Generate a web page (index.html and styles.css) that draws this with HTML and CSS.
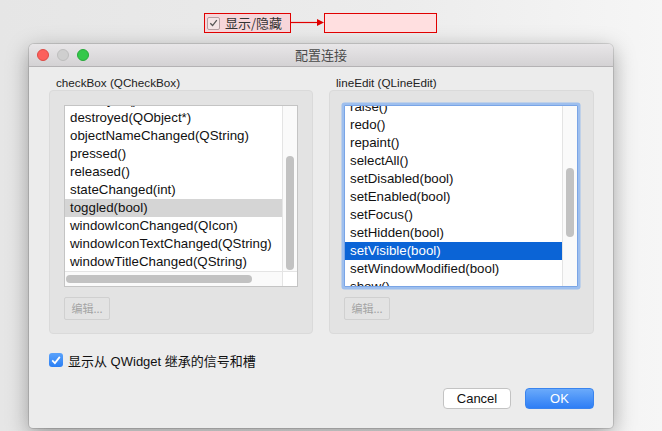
FILE: index.html
```html
<!DOCTYPE html>
<html>
<head>
<meta charset="utf-8">
<link rel="stylesheet" href="styles.css">
</head>
<body>
<div class="top">
  <div class="cbwidget">
    <span class="minicb"><svg width="12" height="12" viewBox="0 0 12 12"><path d="M2.5 6.2 L5 8.8 L9.6 2.8" fill="none" stroke="#555" stroke-width="1.4"/></svg></span>
    <span class="cbtext">显示/隐藏</span>
  </div>
  <svg class="connector" width="33" height="20" viewBox="0 0 33 20"><line x1="0" y1="9.5" x2="28" y2="9.5" stroke="#e00000" stroke-width="1.2"/><path d="M26 6 L33 9.5 L26 13 Z" fill="#e00000"/></svg>
  <div class="lineedit"></div>
</div>

<div class="window">
  <div class="titlebar">
    <div class="lights"><span class="light red"></span><span class="light gray"></span><span class="light green"></span></div>
    <div class="title">配置连接</div>
  </div>
  <div class="content">
    <div class="columns">
      <div class="col">
        <div class="glabel">checkBox (QCheckBox)</div>
        <div class="panel">
          <div class="list list-h">
            <div class="area">
              <div class="rows rows-left">
                <div class="row">destroyed()</div>
                <div class="row">destroyed(QObject*)</div>
                <div class="row">objectNameChanged(QString)</div>
                <div class="row">pressed()</div>
                <div class="row">released()</div>
                <div class="row">stateChanged(int)</div>
                <div class="row sel-gray">toggled(bool)</div>
                <div class="row">windowIconChanged(QIcon)</div>
                <div class="row">windowIconTextChanged(QString)</div>
                <div class="row">windowTitleChanged(QString)</div>
              </div>
            </div>
            <div class="vbar"><div class="vthumb vthumb-left"></div></div>
            <div class="hbar"><div class="hthumb"></div></div>
            <div class="corner"></div>
          </div>
          <div class="editbtn">编辑...</div>
        </div>
      </div>
      <div class="col">
        <div class="glabel">lineEdit (QLineEdit)</div>
        <div class="panel">
          <div class="list list-v focus">
            <div class="area">
              <div class="rows rows-right">
                <div class="row">raise()</div>
                <div class="row">redo()</div>
                <div class="row">repaint()</div>
                <div class="row">selectAll()</div>
                <div class="row">setDisabled(bool)</div>
                <div class="row">setEnabled(bool)</div>
                <div class="row">setFocus()</div>
                <div class="row">setHidden(bool)</div>
                <div class="row sel-blue">setVisible(bool)</div>
                <div class="row">setWindowModified(bool)</div>
                <div class="row">show()</div>
              </div>
            </div>
            <div class="vbar"><div class="vthumb vthumb-right"></div></div>
          </div>
          <div class="editbtn">编辑...</div>
        </div>
      </div>
    </div>
    <div class="inherit">
      <span class="bluecb"><svg width="14" height="14" viewBox="0 0 14 14"><path d="M3.2 7.4 L5.9 10.1 L10.8 3.9" fill="none" stroke="#fff" stroke-width="1.7"/></svg></span>
      <span class="inherit-text">显示从 QWidget 继承的信号和槽</span>
    </div>
    <div class="buttons">
      <div class="btn cancel">Cancel</div>
      <div class="btn ok">OK</div>
    </div>
  </div>
</div>
</body>
</html>
```

FILE: styles.css
```css
* { box-sizing: border-box; }
html, body {
  margin: 0;
  padding: 0;
  width: 662px;
  height: 431px;
  overflow: hidden;
}
body {
  background: linear-gradient(to right, #e6e6e6 0%, #ececec 60%, #f6f6f6 100%);
  font-family: "Liberation Sans", "Noto Sans CJK SC", sans-serif;
  font-size: 13px;
  color: #111;
}
.top {
  height: 44px;
  display: flex;
  align-items: flex-start;
  padding: 13px 0 0 204px;
}
.cbwidget {
  width: 87px;
  height: 20px;
  border: 1px solid #e00000;
  background: #f6d6da;
  display: flex;
  align-items: center;
  padding-left: 2px;
  gap: 5px;
}
.minicb {
  width: 13px;
  height: 13px;
  border: 1px solid #b49ea1;
  border-radius: 2px;
  background: #f3e4e6;
  display: flex;
  align-items: center;
  justify-content: center;
}
.cbtext {
  font-family: "Noto Sans CJK SC", sans-serif;
  font-size: 13px;
  color: #333;
  line-height: 18px;
}
.connector { display: block; margin-top: 0; }
.lineedit {
  width: 113px;
  height: 20px;
  border: 1px solid #e00000;
  background: #ffdfe0;
}
.window {
  margin-left: 29px;
  width: 584px;
  height: 384px;
  background: #ececec;
  border-radius: 5px 5px 4px 4px;
  box-shadow: 0 0 0 1px rgba(0,0,0,0.12), 0 6px 22px rgba(0,0,0,0.35);
  overflow: hidden;
}
.titlebar {
  height: 23px;
  background: linear-gradient(#e8e6e8, #d4d2d4);
  border-bottom: 1px solid #b4b2b4;
  position: relative;
  display: flex;
  align-items: center;
  justify-content: center;
}
.lights {
  position: absolute;
  left: 8px;
  top: 5px;
  display: flex;
  gap: 8px;
}
.light {
  width: 12px;
  height: 12px;
  border-radius: 50%;
}
.red { background: #fc605c; border: 0.5px solid #dd4a45; }
.gray { background: #cfcfcf; border: 0.5px solid #bdbdbd; }
.green { background: #34c84a; border: 0.5px solid #27a93a; }
.title {
  font-family: "Noto Sans CJK SC", sans-serif;
  font-size: 13px;
  color: #4a4a4a;
  line-height: 22px;
}
.content {
  padding: 8px 19px 19px 20px;
}
.columns {
  display: flex;
  gap: 16px;
}
.col { display: flex; flex-direction: column; }
.col:first-child { width: 264px; }
.col:last-child { width: 265px; }
.glabel {
  height: 15px;
  line-height: 15px;
  font-size: 11.7px;
  padding-left: 7px;
  color: #222;
}
.panel {
  height: 244px;
  background: #e3e3e3;
  border: 1px solid #dadada;
  border-radius: 4px;
  padding: 14px 14px 13px 14px;
  display: flex;
  flex-direction: column;
}
.list {
  width: 234px;
  height: 182px;
  background: #fff;
  border: 1px solid #c4c4c4;
  display: grid;
  grid-template-columns: 1fr 15px;
  overflow: hidden;
}
.list-h { grid-template-rows: 1fr 15px; }
.list-v { grid-template-rows: 1fr; }
.focus {
  border-color: #7aa5e6;
  box-shadow: 0 0 0 2.5px #9ebfee;
  border-radius: 1px;
}
.area { overflow: hidden; position: relative; }
.rows-left { margin-top: -15px; }
.rows-right { margin-top: -8px; }
.row {
  height: 18px;
  line-height: 18px;
  padding-left: 5px;
  white-space: nowrap;
  color: #111;
  font-size: 13.3px;
}
.sel-gray { background: #d5d5d5; }
.sel-blue { background: #0b64d6; color: #fff; }
.vbar {
  background: #fafafa;
  border-left: 1px solid #e4e4e4;
  position: relative;
}
.vthumb {
  position: absolute;
  left: 3px;
  width: 8px;
  border-radius: 4px;
  background: #c2c2c2;
}
.vthumb-left { top: 50px; height: 114px; }
.vthumb-right { top: 62px; height: 69px; }
.hbar {
  background: #fafafa;
  border-top: 1px solid #e4e4e4;
  position: relative;
}
.hthumb {
  position: absolute;
  left: 1px;
  top: 3px;
  width: 186px;
  height: 8px;
  border-radius: 4px;
  background: #c2c2c2;
}
.corner {
  background: #fff;
  border-top: 1px solid #e4e4e4;
  border-left: 1px solid #e4e4e4;
}
.editbtn {
  margin-top: 10px;
  width: 46px;
  height: 23px;
  border: 1px solid #d0d0d0;
  border-radius: 2px;
  font-family: "Noto Sans CJK SC", sans-serif;
  font-size: 11px;
  color: #a4a4a4;
  line-height: 21px;
  text-align: center;
}
.inherit {
  margin-top: 18px;
  height: 16px;
  display: flex;
  align-items: center;
  gap: 5px;
}
.bluecb {
  width: 14px;
  height: 14px;
  border-radius: 3px;
  background: linear-gradient(#5aa2fb, #2b7ff4);
  display: flex;
}
.inherit-text {
  font-family: "Liberation Sans", "Noto Sans CJK SC", sans-serif;
  font-size: 13px;
  color: #111;
}
.buttons {
  margin-top: 20px;
  display: flex;
  justify-content: flex-end;
  gap: 14px;
}
.btn {
  height: 21px;
  line-height: 19px;
  text-align: center;
  border-radius: 4px;
  font-size: 13px;
}
.cancel {
  width: 68px;
  background: #fff;
  border: 1px solid #c3c3c3;
  color: #111;
}
.ok {
  width: 69px;
  background: linear-gradient(#6aaafb, #2e7ef5);
  border: 1px solid #3a84ee;
  color: #fff;
}
```
